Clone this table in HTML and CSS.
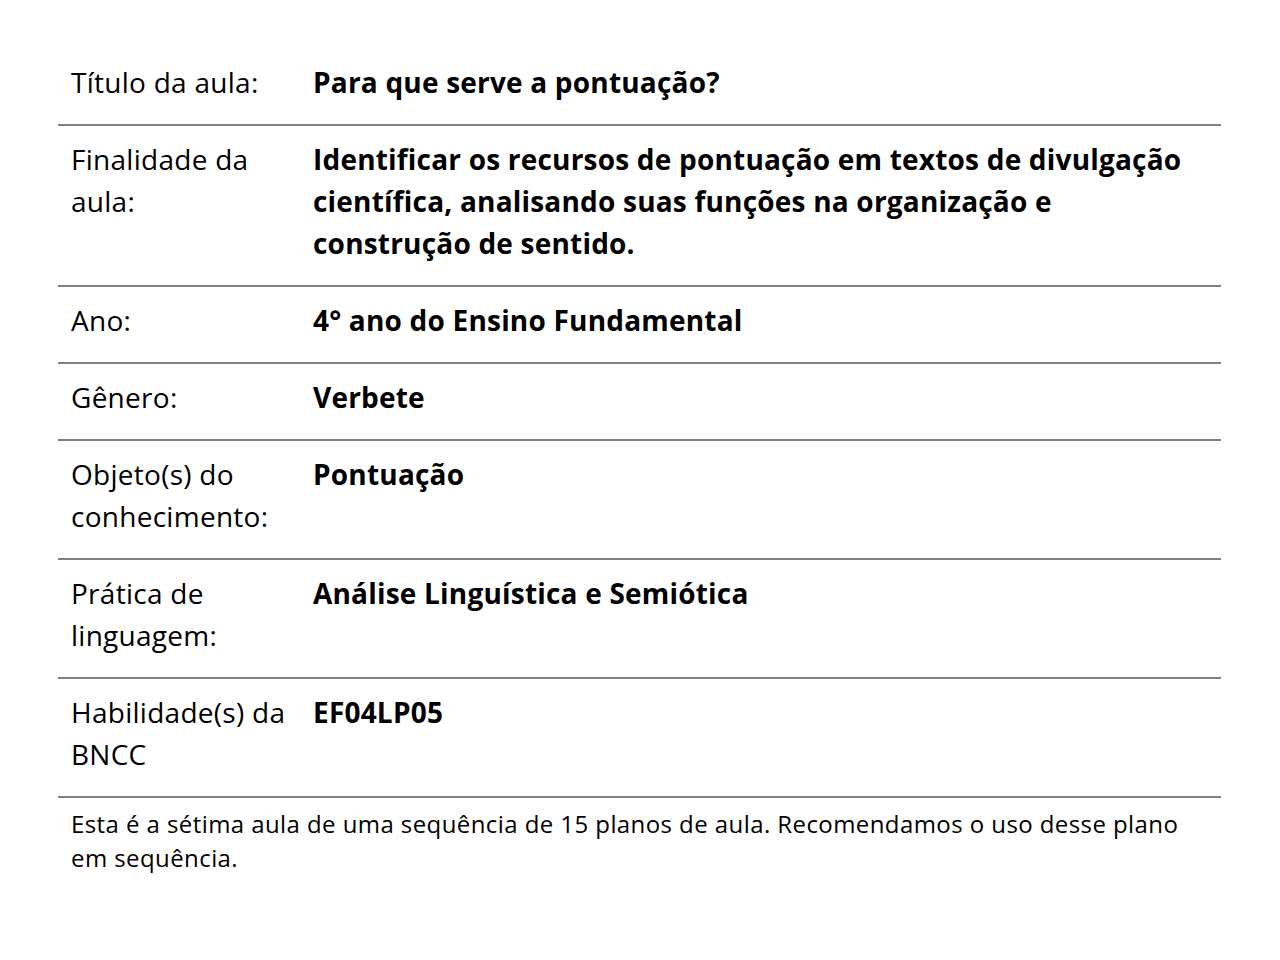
FILE: index.html
```html
<!DOCTYPE html>
<html lang="pt-BR">
<head>
<meta charset="utf-8">
<title>Plano de aula</title>
<link rel="stylesheet" href="styles.css">
</head>
<body>
<main class="sheet">
  <table class="plan">
    <tbody>
      <tr>
        <th class="label">Título da aula:</th>
        <td class="value">Para que serve a pontuação?</td>
      </tr>
      <tr>
        <th class="label">Finalidade da aula:</th>
        <td class="value">Identificar os recursos de pontuação em textos de divulgação científica, analisando suas funções na organização e construção de sentido.</td>
      </tr>
      <tr>
        <th class="label">Ano:</th>
        <td class="value">4° ano do Ensino Fundamental</td>
      </tr>
      <tr>
        <th class="label">Gênero:</th>
        <td class="value">Verbete</td>
      </tr>
      <tr>
        <th class="label">Objeto(s) do conhecimento:</th>
        <td class="value">Pontuação</td>
      </tr>
      <tr>
        <th class="label">Prática de linguagem:</th>
        <td class="value">Análise Linguística e Semiótica</td>
      </tr>
      <tr>
        <th class="label">Habilidade(s) da BNCC</th>
        <td class="value">EF04LP05</td>
      </tr>
    </tbody>
  </table>
  <p class="note">Esta é a sétima aula de uma sequência de 15 planos de aula. Recomendamos o uso desse plano em sequência.</p>
</main>
</body>
</html>
```

FILE: styles.css
```css
html, body {
  margin: 0;
  padding: 0;
  background: #ffffff;
}

body {
  font-family: "Open Sans", "Noto Sans", sans-serif;
  color: #000000;
}

.sheet {
  width: 1163px;
  padding: 49px 0 0 58px;
}

.plan {
  width: 100%;
  border-collapse: collapse;
  table-layout: fixed;
}

.plan tr {
  border-bottom: 2px solid #808080;
}

.label,
.value {
  font-size: 28px;
  line-height: 42px;
  padding: 12px 13px 21px 13px;
  vertical-align: top;
  text-align: left;
}

.label {
  width: 216px;
  font-weight: 400;
  letter-spacing: 0.27px;
}

.value {
  font-weight: 700;
  letter-spacing: 0.2px;
}

.note {
  margin: 0;
  padding: 9px 13px 0 13px;
  font-size: 24px;
  line-height: 34px;
  letter-spacing: 0.42px;
}
```
